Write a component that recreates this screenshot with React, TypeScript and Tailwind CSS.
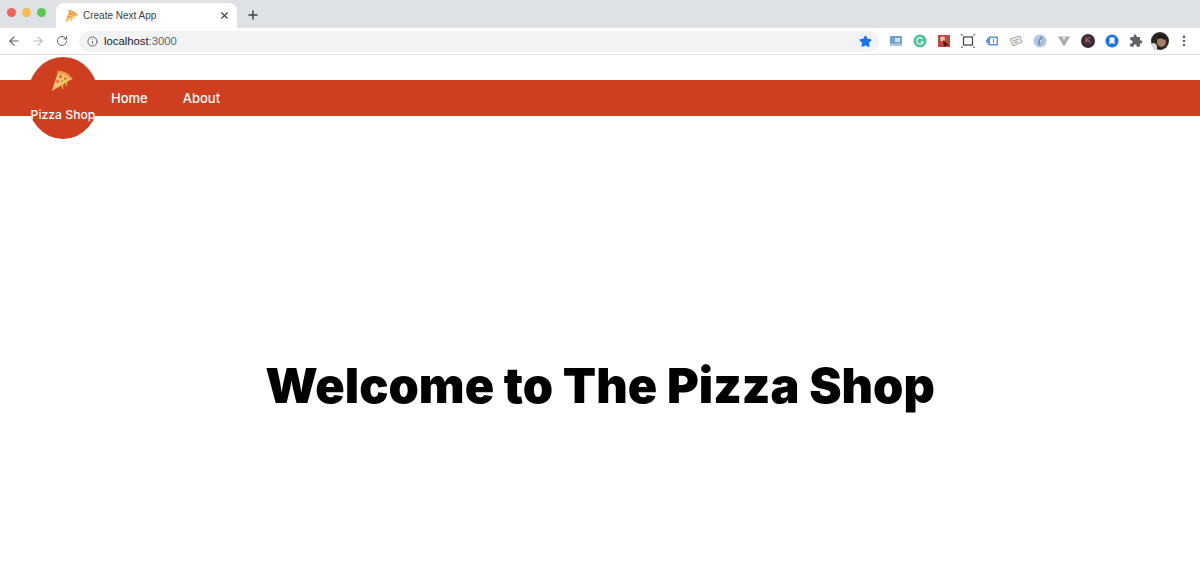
import { ArrowLeft, ArrowRight, Info, MoreVertical, Plus, RotateCw, Star, X } from "lucide-react"

function PizzaIcon({ size, className }: { size: number; className?: string }) {
  return (
    <svg width={size} height={size} viewBox="0 0 24 24" className={className}>
      <path d="M2 23 L8 4 Q17 4 22 11 Z" fill="#f8c46f" />
      <path d="M8 1.5 Q18 2 23.5 10 L22 12 Q17 5.5 7.5 4.5 Z" fill="#ee9c4e" />
      <circle cx="11" cy="8" r="1.7" fill="#dc6a35" />
      <circle cx="16" cy="10" r="1.4" fill="#dc6a35" />
      <circle cx="8" cy="13" r="1.5" fill="#dc6a35" />
      <circle cx="12.5" cy="12.5" r="1" fill="#9aa040" />
      <path d="M17 12 V17 M13 15 V20" stroke="#f6b24f" strokeWidth="1.5" strokeLinecap="round" />
    </svg>
  )
}

function Extensions() {
  return (
    <div className="flex items-center gap-[10px]">
      <svg width="14" height="14" viewBox="0 0 14 14">
        <rect x="1" y="2" width="12" height="10" rx="1" fill="#6fa3c9" />
        <rect x="6" y="4" width="5" height="4" fill="#cfe2f0" />
        <rect x="1" y="9.5" width="12" height="2.5" fill="#a9c7de" />
      </svg>
      <svg width="14" height="14" viewBox="0 0 14 14">
        <circle cx="7" cy="7" r="6.5" fill="#4fbf97" />
        <path d="M9.6 5 A3.3 3.3 0 1 0 10.2 8 H7.6" fill="none" stroke="#d8f3e8" strokeWidth="1.4" />
      </svg>
      <svg width="14" height="14" viewBox="0 0 14 14">
        <rect x="1" y="1" width="12" height="12" fill="#c0483c" />
        <circle cx="5.5" cy="5" r="2.4" fill="#eec3b8" />
        <path d="M6 6 L11.5 11 L7 12.5 Z" fill="#3a1614" />
      </svg>
      <svg width="14" height="14" viewBox="0 0 14 14" fill="none">
        <rect x="2.5" y="3" width="9" height="8" stroke="#3c4043" strokeWidth="1.2" />
        <path d="M0.5 2V0.5H2M12 0.5H13.5V2M0.5 12V13.5H2M12 13.5H13.5V12" stroke="#6b8f70" strokeWidth="1" />
      </svg>
      <svg width="14" height="14" viewBox="0 0 14 14">
        <path d="M0.5 7 L4 2.5 H13 V11.5 H4 Z" fill="#5b93e6" />
        <rect x="5" y="4" width="6.5" height="6" fill="#fff" />
        <rect x="8" y="5" width="1.2" height="4" fill="#5b93e6" />
      </svg>
      <svg width="14" height="14" viewBox="0 0 14 14">
        <path d="M1 5 L11 2 L13 8 L4 12 Z" fill="#ececec" stroke="#8f8f8f" strokeWidth="0.8" />
        <path d="M4 7 L10 5 M5 9 L9 7.5" stroke="#8f8f8f" strokeWidth="0.8" />
      </svg>
      <svg width="14" height="14" viewBox="0 0 14 14">
        <circle cx="7" cy="7" r="6.5" fill="#b4c6de" />
        <path d="M9 2 Q4 6 5.5 12 Q11 8 9 2 Z" fill="#5f8ac4" />
        <path d="M8.5 4.5 Q6 7 6.8 10 Q9.5 7.5 8.5 4.5 Z" fill="#e3ebf5" />
      </svg>
      <svg width="14" height="14" viewBox="0 0 14 14">
        <path d="M1 2.5 H13 L7 12.5 Z" fill="#a3a8ad" />
        <path d="M4.5 2.5 H9.5 L7 7 Z" fill="#dcdfe1" />
      </svg>
      <div className="flex h-[14px] w-[14px] items-center justify-center rounded-full bg-[#3a2d38] font-['Liberation_Sans',sans-serif] text-[9px] text-[#c9829a]">
        K
      </div>
      <svg width="14" height="14" viewBox="0 0 14 14">
        <circle cx="7" cy="7" r="6.5" fill="#1a73e8" />
        <path d="M4.5 3.5 H9.5 V10.5 L7 8.8 L4.5 10.5 Z" fill="#fff" />
      </svg>
      <svg width="14" height="14" viewBox="0 0 24 24" fill="#5f6368">
        <path d="M20.5 11H19V7c0-1.1-.9-2-2-2h-4V3.5C13 2.12 11.88 1 10.5 1S8 2.12 8 3.5V5H4c-1.1 0-2 .9-2 2v3.8h1.5c1.5 0 2.7 1.2 2.7 2.7s-1.2 2.7-2.7 2.7H2V20c0 1.1.9 2 2 2h3.8v-1.5c0-1.5 1.2-2.7 2.7-2.7s2.7 1.2 2.7 2.7V22H17c1.1 0 2-.9 2-2v-4h1.5c1.38 0 2.5-1.12 2.5-2.5S21.88 11 20.5 11z" />
      </svg>
      <svg width="18" height="18" viewBox="0 0 18 18" className="-mx-[2px]">
        <circle cx="9" cy="9" r="9" fill="#2c2623" />
        <ellipse cx="10.5" cy="10" rx="4.5" ry="5" fill="#a67c68" />
        <path d="M0.5 12 Q4 9 6 14 L6 18 H3 Z" fill="#d8d8d8" />
        <path d="M7 4 Q11 2 15 6 L14 8 Q10 5 7 7 Z" fill="#1c1715" />
      </svg>
      <MoreVertical size={14} strokeWidth={2.5} className="text-[#5f6368]" />
    </div>
  )
}

function BrowserChrome() {
  return (
    <div className="font-['Liberation_Sans',sans-serif]">
      <div className="flex h-[28px] items-end bg-[#dee1e6]">
        <div className="flex h-[28px] items-center gap-[6px] pb-[4px] pl-[7px]">
          <span className="h-[9px] w-[9px] rounded-full bg-[#ee6259]" />
          <span className="h-[9px] w-[9px] rounded-full bg-[#f5bd4f]" />
          <span className="h-[9px] w-[9px] rounded-full bg-[#61c554]" />
        </div>
        <div className="ml-[10px] flex h-[25px] w-[181px] items-center rounded-t-lg bg-white pl-[8px] pr-[7px]">
          <PizzaIcon size={14} />
          <span className="ml-[5px] flex-1 text-[10px] text-[#3c4043]">Create Next App</span>
          <X size={11} strokeWidth={2.5} className="text-[#3c4043]" />
        </div>
        <Plus size={14} strokeWidth={2.5} className="mb-[6px] ml-[9px] text-[#3c4043]" />
      </div>
      <div className="flex h-[27px] items-center border-b border-[#dfe1e5] bg-white pl-[7px] pr-[7px]">
        <ArrowLeft size={14} className="text-[#5f6368]" />
        <ArrowRight size={14} className="ml-[10px] text-[#b6b9bd]" />
        <RotateCw size={12} className="ml-[11px] text-[#5f6368]" />
        <div className="ml-[11px] flex h-[21px] w-[800px] items-center rounded-full bg-[#f1f3f4] pl-[8px] pr-[7px]">
          <Info size={11} className="text-[#5f6368]" />
          <span className="ml-[6px] flex-1 text-[11.3px] text-[#5f6368]">
            <span className="text-[#202124]">localhost</span>:3000
          </span>
          <Star size={13} className="fill-[#1a73e8] text-[#1a73e8]" />
        </div>
        <div className="ml-[10px]">
          <Extensions />
        </div>
      </div>
    </div>
  )
}

function Navbar() {
  return (
    <nav className="mt-[25px] flex h-[36px] items-center bg-[#d03e20] pl-[27px] font-['Inter',sans-serif] text-white">
      <a className="-my-[23px] flex h-[82px] w-[72px] flex-col items-center rounded-[50%] bg-[#d03e20] pt-[12px]">
        <PizzaIcon size={23} className="mr-[4px]" />
        <span className="mt-[14px] whitespace-nowrap text-[12.2px] font-medium">Pizza Shop</span>
      </a>
      <a className="ml-[12px] pt-px text-[13px] font-medium">Home</a>
      <a className="ml-[35px] pt-px text-[13px] font-medium">About</a>
    </nav>
  )
}

export default function App() {
  return (
    <div className="flex h-[571px] w-[1200px] flex-col overflow-hidden bg-white">
      <BrowserChrome />
      <Navbar />
      <main className="flex flex-1 items-start justify-center pt-[237px]">
        <h1 className="font-['Inter',sans-serif] text-[48.6px] leading-[66px] font-black text-black">
          Welcome to The Pizza Shop
        </h1>
      </main>
    </div>
  )
}
